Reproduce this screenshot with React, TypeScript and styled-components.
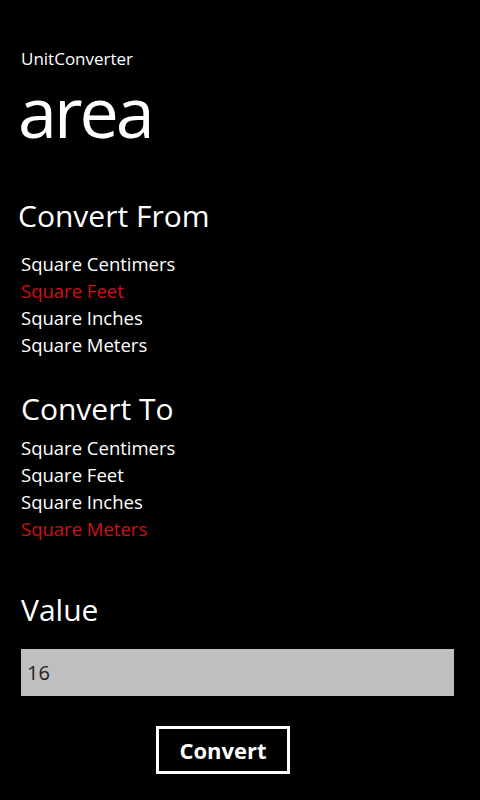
import React from "react";
import styled, { createGlobalStyle } from "styled-components";

const Global = createGlobalStyle`
  html, body { margin: 0; padding: 0; background: #000; }
  body { font-family: "Open Sans", "Noto Sans", sans-serif; color: #fff; }
`;

const Page = styled.div`
  width: 480px;
  height: 800px;
  box-sizing: border-box;
  padding: 47px 26px 0 21px;
  display: flex;
  flex-direction: column;
  overflow: hidden;
`;

const AppTitle = styled.div`
  font-size: 17px;
  line-height: 24px;
`;

const PageTitle = styled.div`
  font-size: 70px;
  line-height: 72px;
  margin-top: 4px;
  margin-left: -3px;
  letter-spacing: -3px;
`;

const Heading = styled.div<{ $top: number; $shift?: number }>`
  font-size: 30px;
  line-height: 40px;
  margin-top: ${(p) => p.$top}px;
  margin-left: ${(p) => p.$shift ?? 0}px;
`;

const List = styled.div<{ $top: number }>`
  display: flex;
  flex-direction: column;
  margin-top: ${(p) => p.$top}px;
`;

const Item = styled.div<{ $selected?: boolean }>`
  font-size: 18.5px;
  line-height: 27px;
  color: ${(p) => (p.$selected ? "#d01010" : "#fff")};
`;

const Input = styled.div`
  margin-top: 19px;
  height: 47px;
  background: #bfbfbf;
  color: #222;
  font-size: 20px;
  display: flex;
  align-items: center;
  padding-left: 6px;
`;

const ButtonRow = styled.div`
  display: flex;
  justify-content: flex-start;
  padding-left: 135px;
  margin-top: 30px;
`;

const Button = styled.div`
  width: 134px;
  height: 48px;
  box-sizing: border-box;
  border: 3px solid #fff;
  display: flex;
  align-items: center;
  justify-content: center;
  font-size: 22px;
  font-weight: 700;
`;

const units = ["Square Centimers", "Square Feet", "Square Inches", "Square Meters"];

export default function App() {
  return (
    <>
      <Global />
      <Page>
        <AppTitle>UnitConverter</AppTitle>
        <PageTitle>area</PageTitle>
        <Heading $top={49} $shift={-3}>Convert From</Heading>
        <List $top={14}>
          {units.map((t) => (
            <Item key={t} $selected={t === "Square Feet"}>{t}</Item>
          ))}
        </List>
        <Heading $top={31}>Convert To</Heading>
        <List $top={5}>
          {units.map((t) => (
            <Item key={t} $selected={t === "Square Meters"}>{t}</Item>
          ))}
        </List>
        <Heading $top={48}>Value</Heading>
        <Input>16</Input>
        <ButtonRow>
          <Button>Convert</Button>
        </ButtonRow>
      </Page>
    </>
  );
}
